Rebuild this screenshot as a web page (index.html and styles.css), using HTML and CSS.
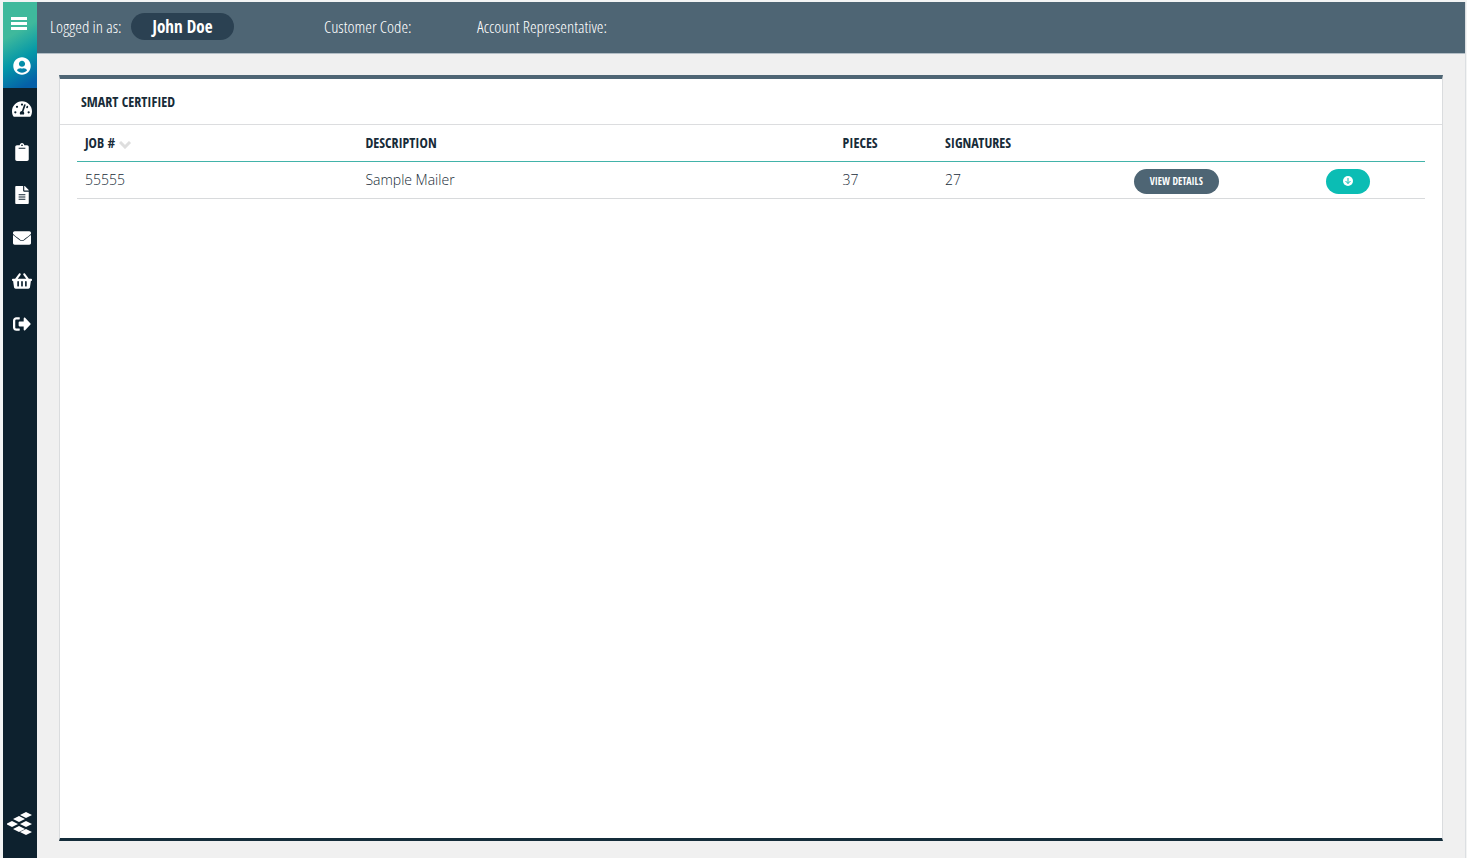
FILE: index.html
```html
<!DOCTYPE html>
<html lang="en">
<head>
<meta charset="utf-8">
<meta name="viewport" content="width=device-width, initial-scale=1">
<title>Smart Certified</title>
<link rel="stylesheet" href="styles.css">
</head>
<body>
<div class="app">
  <nav class="sidebar" aria-label="Main">
    <div class="sidebar-top">
      <button class="nav-item nav-toggle" type="button" aria-label="Menu">
        <svg width="16" height="14" viewBox="0 0 16 14"><path d="M0 0h16v3H0zM0 5h16v3H0zM0 10h16v3H0z"/></svg>
      </button>
      <a class="nav-item" href="#" aria-label="Account">
        <svg width="18" height="18" viewBox="0 0 496 512"><path d="M248 8C111 8 0 119 0 256s111 248 248 248 248-111 248-248S385 8 248 8zm0 96c49 0 88 39 88 88s-39 88-88 88-88-39-88-88 39-88 88-88zm0 344c-59 0-111-27-146-68 19-35 56-60 98-60 3 0 5 0 7 1 13 4 27 7 41 7s28-3 41-7c2-1 4-1 7-1 42 0 79 25 98 60-35 41-87 68-146 68z"/></svg>
      </a>
    </div>
    <a class="nav-item" href="#" aria-label="Dashboard">
      <svg width="20" height="18" viewBox="0 0 576 512"><path fill-rule="evenodd" d="M288 32C129 32 0 161 0 320c0 53 14 102 39 145 6 9 17 15 28 15h442c11 0 22-6 28-15 25-43 39-92 39-145C576 161 447 32 288 32zM288 96a32 32 0 1 1 0 64 32 32 0 0 1 0-64zM96 384a32 32 0 1 1 0-64 32 32 0 0 1 0 64zm48-160a32 32 0 1 1 0-64 32 32 0 0 1 0 64zm247-77-61 184c13 12 22 29 22 49 0 12-3 22-9 32H233c-5-10-9-20-9-32 0-34 27-62 61-64l61-184c10-30 55-15 45 15zm26 77c-4 0-8-1-11-2l18-56a32 32 0 1 1-7 58zm63 160a32 32 0 1 1 0-64 32 32 0 0 1 0 64z"/></svg>
    </a>
    <a class="nav-item" href="#" aria-label="Jobs">
      <svg width="14" height="18" viewBox="0 0 384 512"><path fill-rule="evenodd" d="M384 112v352c0 27-21 48-48 48H48c-27 0-48-21-48-48V112c0-27 21-48 48-48h80c0-35 29-64 64-64s64 29 64 64h80c27 0 48 21 48 48zM192 40a24 24 0 1 0 0 48 24 24 0 0 0 0-48m96 114v-20H96v20c0 6 6 12 12 12h168c6 0 12-6 12-12"/></svg>
    </a>
    <a class="nav-item" href="#" aria-label="Documents">
      <svg width="14" height="18" viewBox="0 0 384 512"><path fill-rule="evenodd" d="M224 136V0H24C11 0 0 11 0 24v464c0 13 11 24 24 24h336c13 0 24-11 24-24V160H248c-13 0-24-11-24-24zm64 256H96v-32h192zm0-64H96v-32h192zm0-64H96v-32h192zM384 122v6H256V0h6c6 0 13 3 17 7l98 98c4 4 7 11 7 17z"/></svg>
    </a>
    <a class="nav-item" href="#" aria-label="Mail">
      <svg width="18" height="18" viewBox="0 0 512 512"><path d="M502 175c4-3 10 0 10 5v220c0 27-21 48-48 48H48c-27 0-48-21-48-48V180c0-5 6-8 10-5 22 17 52 39 154 122 21 15 57 47 92 47 35 0 71-33 92-47 102-83 132-105 154-122zM256 328c23 0 56-29 73-41 133-101 143-113 174-137 6-5 9-12 9-19v-19c0-27-21-48-48-48H48c-27 0-48 21-48 48v19c0 7 3 14 9 19 31 24 41 36 174 137 17 12 50 41 73 41z"/></svg>
    </a>
    <a class="nav-item" href="#" aria-label="Basket">
      <svg width="20" height="18" viewBox="0 0 576 512"><path fill-rule="evenodd" d="M576 216v16c0 13-11 24-24 24h-8l-26 179c-3 24-24 41-47 41H105c-24 0-44-17-47-41L32 256h-8c-13 0-24-11-24-24v-16c0-13 11-24 24-24h67L198 45c10-13 29-16 42-6 14 9 17 28 7 42l-81 111h244L329 81c-10-14-7-33 7-42 13-10 32-7 42 6l107 147h67c13 0 24 11 24 24zM312 392V280a24 24 0 0 0-48 0v112a24 24 0 0 0 48 0zm112 0V280a24 24 0 0 0-48 0v112a24 24 0 0 0 48 0zm-224 0V280a24 24 0 0 0-48 0v112a24 24 0 0 0 48 0z"/></svg>
    </a>
    <a class="nav-item" href="#" aria-label="Log out">
      <svg width="18" height="18" viewBox="0 0 512 512"><path d="M180 448H96c-53 0-96-43-96-96V160c0-53 43-96 96-96h84c7 0 12 5 12 12v40c0 7-5 12-12 12H96c-18 0-32 14-32 32v192c0 18 14 32 32 32h84c7 0 12 5 12 12v40c0 7-5 12-12 12zm-20-148v-88c0-13 11-24 24-24h120V96c0-21 26-32 41-17l152 160c9 9 9 25 0 34L345 433c-15 15-41 4-41-17v-92H184c-13 0-24-11-24-24z"/></svg>
    </a>
    <div class="brand">
      <svg width="26" height="24" viewBox="0 0 26 24" role="img" aria-label="Company logo"><path d="M19 0l6 3-6 3-6-3zM12 4l6 3-6 3-6-3zM5 9l6 3-6 3-6-3zM19 9l6 3-6 3-6-3zM12 14l6 3-6 3-6-3zM19 17l6 3-6 3-6-3z"/></svg>
    </div>
  </nav>
  <div class="content">
    <header class="topbar">
      <div class="user"><span>Logged in as:</span><span class="user-name">John Doe</span></div>
      <span class="customer">Customer Code:</span>
      <span>Account Representative:</span>
    </header>
    <main class="main">
      <section class="panel">
        <h1 class="panel-title">SMART CERTIFIED</h1>
        <div class="panel-body">
          <table class="jobs">
            <colgroup><col class="col-job"><col class="col-description"><col class="col-pieces"><col class="col-signatures"><col class="col-details"><col class="col-download"></colgroup>
            <thead>
              <tr>
                <th scope="col">JOB # <svg class="sort" width="13" height="8" viewBox="0 0 13 8"><path d="M1 1l5 5 5-5"/></svg></th>
                <th scope="col">DESCRIPTION</th>
                <th scope="col">PIECES</th>
                <th scope="col">SIGNATURES</th>
                <th></th>
                <th></th>
              </tr>
            </thead>
            <tbody>
              <tr>
                <td>55555</td>
                <td>Sample Mailer</td>
                <td>37</td>
                <td>27</td>
                <td class="action"><button class="pill" type="button">VIEW DETAILS</button></td>
                <td class="action"><button class="pill pill-download" type="button" aria-label="Download"><svg width="10" height="10" viewBox="0 0 20 20"><circle cx="10" cy="10" r="10"/><path d="M10 4v11M5 10l5 5 5-5"/></svg></button></td>
              </tr>
            </tbody>
          </table>
        </div>
      </section>
    </main>
  </div>
</div>
</body>
</html>
```
FILE: styles.css
```css
* {
  box-sizing: border-box;
}

:root {
  --condensed: "Open Sans Condensed", "Noto Sans Condensed", "Roboto Condensed", "Liberation Sans Narrow", "Open Sans", sans-serif;
  --condensed-light: "Open Sans Condensed Light", "Open Sans Condensed", "Roboto Condensed", "Liberation Sans Narrow", "Open Sans", sans-serif;
  --navy: #0d212e;
  --slate: #4e6574;
}

body {
  margin: 0;
  background: #fff;
  color: #172b38;
  font: 300 14px/20px "Open Sans", sans-serif;
}

.app {
  display: flex;
  min-height: 100vh;
  padding: 2px 1px 0 3px;
  background: #f3f4f4;
}

.sidebar {
  display: flex;
  flex-direction: column;
  flex: none;
  width: 34px;
  background: var(--navy);
}

.sidebar-top {
  background: linear-gradient(150deg, #3fb99c 36%, #0497a8 64%, #0560a8 92%);
}

.nav-item {
  display: flex;
  align-items: center;
  justify-content: center;
  width: 100%;
  height: 43px;
  padding: 0 0 1px 4px;
  border: 0;
  background: none;
}

.nav-toggle {
  padding: 0 2px 0 0;
}

.nav-item svg,
.brand svg {
  display: block;
  fill: #fff;
}

.brand {
  margin-top: auto;
  padding: 0 4px 22px;
}

.content {
  display: flex;
  flex-direction: column;
  flex: 1;
  min-width: 0;
  border-right: 1px solid #dcdfe2;
  background: #f0f0f0;
}

.topbar {
  display: flex;
  align-items: center;
  height: 52px;
  padding: 0 13px 2px;
  border-bottom: 1px solid #b3bec6;
  background: var(--slate);
  color: #fff;
  font: 300 17px/24px var(--condensed-light);
  white-space: nowrap;
}

.user {
  display: flex;
  align-items: center;
  gap: 9px;
  width: 274px;
}

.user-name {
  padding: 2px 22px 1px;
  border-radius: 14px;
  background: #2b4152;
  font-family: var(--condensed);
  font-weight: 700;
}

.customer {
  width: 153px;
}

.main {
  display: flex;
  flex: 1;
  padding: 21px 22px 17px;
}

.panel {
  flex: 1;
  min-width: 0;
  border: 1px solid #dadcde;
  border-top: 4px solid var(--slate);
  border-bottom: 3px solid #142c3a;
  background: #fff;
}

.panel-title {
  margin: 0;
  padding: 13px 21px 12px;
  border-bottom: 1px solid #dcdddf;
  font: 700 14px/20px var(--condensed);
}

.panel-body {
  padding: 0 17px;
}

.jobs {
  width: 100%;
  table-layout: fixed;
  border-collapse: separate;
  border-spacing: 0;
}

.col-job { width: 20.8%; }
.col-description { width: 35.4%; }
.col-pieces { width: 7.6%; }
.col-signatures { width: 10.7%; }
.col-details { width: 14.1%; }
.col-download { width: 11.4%; }

.jobs th,
.jobs td {
  height: 37px;
  padding: 0 8px;
  text-align: left;
  vertical-align: middle;
}

.jobs th {
  border-bottom: 1px solid #42b3a9;
  font: 700 14px/20px var(--condensed);
}

.jobs td {
  border-bottom: 1px solid #d8dadc;
}

.jobs .action {
  padding-top: 2px;
  text-align: center;
}

.sort {
  fill: none;
  stroke: #dedede;
  stroke-width: 3;
  vertical-align: -1px;
}

.pill {
  display: inline-flex;
  align-items: center;
  height: 25px;
  padding: 0 16px;
  border: 0;
  border-radius: 13px;
  background: var(--slate);
  color: #fff;
  font: 700 10px/24px var(--condensed);
  vertical-align: middle;
}

.pill-download {
  padding: 0 17px;
  background: #0bbdb4;
}

.pill-download circle {
  fill: #fff;
}

.pill-download path {
  fill: none;
  stroke: #0bbdb4;
  stroke-width: 2;
}
```
